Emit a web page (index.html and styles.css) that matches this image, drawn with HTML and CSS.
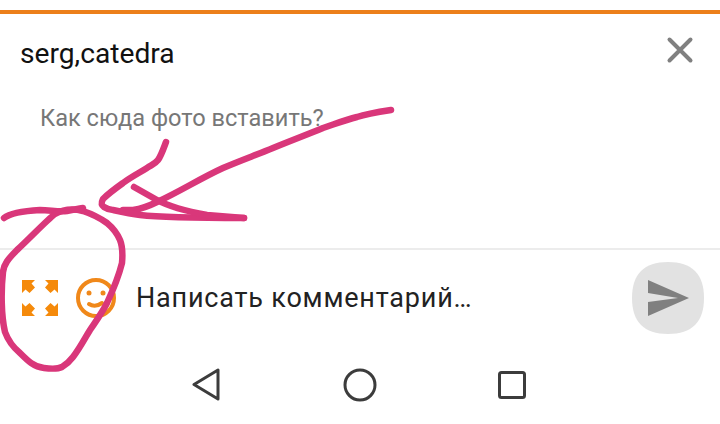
FILE: index.html
```html
<!doctype html>
<html lang="en">
  <head>
    <meta charset="UTF-8" />
    <meta name="viewport" content="width=device-width, initial-scale=1.0" />
    <title>Комментарий</title>
    <link rel="stylesheet" href="styles.css">
  </head>
  <body>
    <div class="screen">
      <div class="accent-bar"></div>

      <!-- Header -->
      <header class="sheet-header">
        <h1 class="sheet-title">serg,catedra</h1>
        <svg class="close-icon" width="28" height="28" viewBox="0 0 28 28">
          <path d="M3.500 3.500 24.500 24.500M24.500 3.500 3.500 24.500" />
        </svg>
      </header>

      <p class="comment-text">Как сюда фото вставить?</p>

      <!-- Composer -->
      <div class="composer">
        <svg class="expand-icon" width="36" height="36" viewBox="0 0 36 36">
          <path d="M0 0H13L9.500 3.500 13 7.500 7.500 13 3.500 9.500 0 13Z" />
          <path d="M36 0H23L26.500 3.500 23 7.500 28.500 13 32.500 9.500 36 13Z" />
          <path d="M0 36H13L9.500 32.500 13 28.500 7.500 23 3.500 26.500 0 23Z" />
          <path d="M36 36H23L26.500 32.500 23 28.500 28.500 23 32.500 26.500 36 23Z" />
        </svg>
        <svg class="smile-icon" width="40" height="40" viewBox="0 0 40 40">
          <circle class="smile-face" cx="20" cy="20" r="18" />
          <circle class="smile-eye" cx="13" cy="15" r="2.500" />
          <circle class="smile-eye" cx="27" cy="15" r="2.500" />
          <path class="smile-face" d="M13 26Q19 30 26 25" />
        </svg>
        <span class="composer-placeholder">Написать комментарий…</span>
        <button class="send-button">
          <svg width="72" height="72" viewBox="0 0 72 72">
            <path class="send-bg" d="M36 0C60 0 72 12 72 36S60 72 36 72 0 60 0 36 12 0 36 0Z" />
            <path class="send-arrow" d="M16 18 57 36 16 54V40L46 36 16 31Z" />
          </svg>
        </button>
      </div>

      <!-- Nav bar -->
      <nav class="nav-bar">
        <svg width="28" height="34" viewBox="0 0 28 34">
          <path d="M2 16.500 26 2V31Z" />
        </svg>
        <svg class="nav-home" width="34" height="34" viewBox="0 0 34 34">
          <circle cx="17" cy="17" r="15" />
        </svg>
        <svg width="28" height="28" viewBox="0 0 28 28">
          <rect x="1.500" y="1.500" width="25" height="25" rx="2" />
        </svg>
      </nav>

      <!-- Hand drawn marks on top of the screenshot -->
      <svg class="scribble" width="720" height="424" viewBox="0 0 720 424">
        <path d="M391 110C378 112 366 114 357 117 345 120 335 124 323 128 306 135 290 141 273 148 256 155 239 161 223 168 212 173 201 179 190 185 179 191 168 197 157 202 147 207 140 209 133 210L123 210" />
        <path d="M166 142C163 150 161 156 158 160 155 164 151 165 147 168 139 173 131 177 123 183 116 188 109 193 103 199 101 203 101 205 104 207 107 209 110 210 113 210 122 212 131 214 140 215 165 218 205 218 244 218" />
        <path d="M134 187 157 200C170 207 185 211 207 215L244 218" />
        <path d="M4 218C9 214 22 211 40 210 50 210 58 212 67 211 72 210 77 209 83 208" />
        <path d="M83 211C72 208 62 210 55 214 47 220 30 238 17 250 8 259 4 264 3 272 1 290 1 315 5 332 9 343 14 348 20 353 28 361 34 367 44 368 52 369 58 369 62 367 67 364 70 361 73 357 80 348 85 338 90 330 96 321 102 313 107 303 114 288 119 275 122 263 123 252 122 245 120 240 117 233 113 228 107 223 100 218 92 214 83 211Z" />
      </svg>
    </div>
  </body>
</html>
```

FILE: styles.css
```css
html,
body {
  margin: 0;
  padding: 0;
}

body {
  font-family: Roboto, "Noto Sans", sans-serif;
  background-color: #fff;
}

.screen {
  position: relative;
  width: 720px;
  height: 424px;
  overflow: hidden;
  padding-top: 10px;
  box-sizing: border-box;
}

.accent-bar {
  height: 4px;
  background-color: #ec7f1a;
}

.sheet-header {
  display: flex;
  align-items: center;
  justify-content: space-between;
  height: 54px;
  margin-top: 12px;
  padding: 0 26px 0 20px;
}

.sheet-title {
  margin: 0;
  font-size: 28.200px;
  font-weight: 400;
  color: #111;
}

.close-icon {
  margin-bottom: 6px;
}

.close-icon path {
  fill: none;
  stroke: #808080;
  stroke-width: 4;
  stroke-linecap: round;
}

.comment-text {
  height: 168px;
  margin: 0;
  padding: 24px 0 0 40px;
  box-sizing: border-box;
  font-size: 23.600px;
  line-height: 28px;
  color: #777;
}

.composer {
  display: flex;
  align-items: center;
  height: 98px;
  padding: 0 16px 0 22px;
  border-top: 2px solid #ececec;
  box-sizing: border-box;
}

.expand-icon path {
  fill: #f58a0b;
}

.smile-icon {
  margin-left: 18px;
}

.smile-face {
  fill: none;
  stroke: #f0881a;
  stroke-width: 4;
  stroke-linecap: round;
}

.smile-eye {
  fill: #f0881a;
}

.composer-placeholder {
  margin-left: 20px;
  flex: 1;
  font-size: 27px;
  letter-spacing: 0.800px;
  color: #222;
}

.send-button {
  display: block;
  padding: 0;
  border: none;
  background: none;
}

.send-button svg {
  display: block;
}

.send-bg {
  fill: #e2e2e2;
}

.send-arrow {
  fill: #808080;
}

.nav-bar {
  display: flex;
  align-items: center;
  justify-content: center;
  gap: 121px;
  height: 78px;
  padding-right: 2px;
}

.nav-home {
  margin-left: 2px;
}

.nav-bar svg * {
  fill: none;
  stroke: #3c3c3c;
  stroke-width: 3;
  stroke-linejoin: round;
}

.scribble {
  position: absolute;
  top: 0;
  left: 0;
}

.scribble path {
  fill: none;
  stroke: #d9377a;
  stroke-width: 6.500;
  stroke-linecap: round;
  stroke-linejoin: round;
}
```
